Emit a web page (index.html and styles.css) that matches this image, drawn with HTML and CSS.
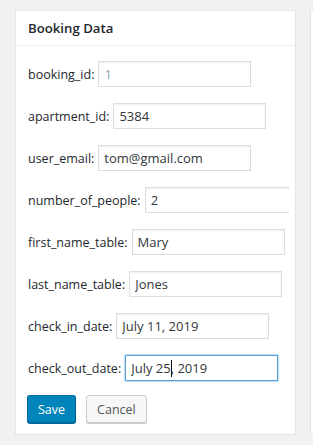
FILE: index.html
```html
<!DOCTYPE html>
<html lang="en">
<head>
  <meta charset="UTF-8" />
  <meta name="viewport" content="width=device-width, initial-scale=1.0"/>
  <title>Booking Data</title>
  <link rel="stylesheet" href="styles.css">
</head>
<body>
  <div class="wrap">
    <div class="postbox">
      <h2 class="hndle">Booking Data</h2>
      <div class="inside">
        <form>
          <div class="fields">
            <p class="row"><label for="booking_id">booking_id:</label><input type="text" id="booking_id" class="readonly" value="1" readonly /></p>
            <p class="row"><label for="apartment_id">apartment_id:</label><input type="text" id="apartment_id" value="5384" /></p>
            <p class="row"><label for="user_email">user_email:</label><input type="text" id="user_email" value="tom@gmail.com" /></p>
            <p class="row"><label for="number_of_people">number_of_people:</label><input type="text" id="number_of_people" value="2" /></p>
            <p class="row"><label for="first_name_table">first_name_table:</label><input type="text" id="first_name_table" value="Mary" /></p>
            <p class="row"><label for="last_name_table">last_name_table:</label><input type="text" id="last_name_table" value="Jones" /></p>
            <p class="row"><label for="check_in_date">check_in_date:</label><input type="text" id="check_in_date" value="July 11, 2019" /></p>
            <p class="row"><label for="check_out_date">check_out_date:</label><span class="field-wrap"><input type="text" id="check_out_date" class="focused" value="July 25, 2019" /><span class="caret"></span></span></p>
          </div>
          <div class="actions">
            <button type="button" class="button button-primary">Save</button>
            <button type="button" class="button">Cancel</button>
          </div>
        </form>
      </div>
    </div>
    <div class="postbox side"></div>
  </div>
</body>
</html>
```

FILE: styles.css
```css
html, body {
  margin: 0;
  padding: 0;
  background: #f1f1f1;
  font-family: 'Open Sans', 'Noto Sans', sans-serif;
  font-size: 12.5px;
  color: #23282d;
  overflow: hidden;
}
.wrap {
  display: flex;
  align-items: flex-start;
  gap: 14px;
  padding: 10px 0 0 15px;
}
.postbox {
  flex-shrink: 0;
  box-sizing: border-box;
  width: 281px;
  background: #fff;
  border: 1px solid #e5e5e5;
  box-shadow: 0 1px 1px rgba(0,0,0,0.04);
}
.postbox.side {
  flex: 1;
  width: auto;
  min-width: 0;
  height: 425px;
  border-right: none;
}
.hndle {
  margin: 0;
  padding: 0 12px;
  height: 34px;
  line-height: 34px;
  font-size: 13.2px;
  font-weight: 600;
  border-bottom: 1px solid #eee;
}
.inside {
  padding: 15px 0 11px 12px;
}
.fields {
  display: flex;
  flex-direction: column;
  gap: 16px;
  width: 261px;
  overflow: hidden;
  padding-bottom: 2px;
}
.row {
  display: flex;
  align-items: center;
  gap: 4px;
  margin: 0;
  height: 26px;
  white-space: nowrap;
}
.row label {
  flex-shrink: 0;
}
.row input {
  flex-shrink: 0;
  box-sizing: border-box;
  width: 153px;
  height: 26px;
  margin: 0;
  padding: 3px 5px;
  border: 1px solid #ddd;
  box-shadow: inset 0 1px 2px rgba(0,0,0,0.07);
  background: #fff;
  color: #32373c;
  font-family: inherit;
  font-size: 13px;
  outline: none;
}
.row input.readonly {
  color: #8fa6ba;
}
.row input.focused {
  border-color: #5b9dd9;
  box-shadow: 0 0 2px rgba(30,140,190,0.8);
}
.field-wrap {
  position: relative;
  display: inline-block;
}
.caret {
  position: absolute;
  left: 46px;
  top: 5px;
  width: 1px;
  height: 17px;
  background: #111;
}
.actions {
  display: flex;
  gap: 10px;
  margin: 12px 0 0 -1px;
}
.button {
  box-sizing: border-box;
  height: 28px;
  padding: 0 10px;
  border: 1px solid #ccc;
  border-radius: 3px;
  background: #f7f7f7;
  box-shadow: 0 1px 0 #ccc;
  color: #555;
  font-family: inherit;
  font-size: 12.5px;
  cursor: pointer;
}
.button-primary {
  background: #0085ba;
  border-color: #0073aa #006799 #006799;
  box-shadow: 0 1px 0 #006799;
  color: #fff;
}
```
